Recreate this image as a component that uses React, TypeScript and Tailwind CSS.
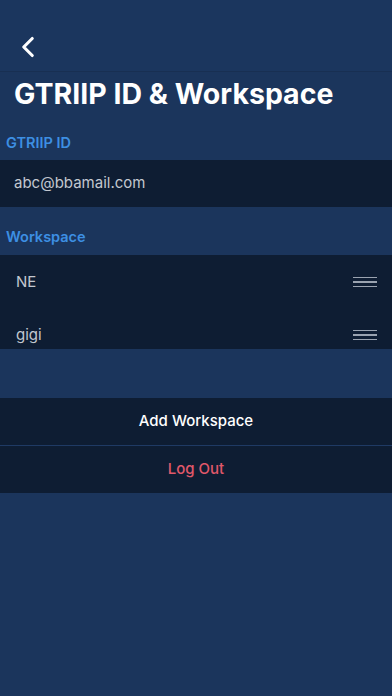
import { ChevronLeft } from 'lucide-react'

function Handle() {
  return (
    <div className="flex flex-col gap-[3px] w-6">
      <div className="h-[1.5px] bg-[#9aa3b0]" />
      <div className="h-[1.5px] bg-[#9aa3b0]" />
      <div className="h-[1.5px] bg-[#9aa3b0]" />
    </div>
  )
}

export default function App() {
  const workspaces = ['NE', 'gigi']

  return (
    <main
      className="w-[392px] h-[696px] bg-[#1b355c] text-white flex flex-col"
      style={{ fontFamily: 'Inter, "Noto Sans", sans-serif' }}
    >
      <div className="h-[72px] bg-[#1b365e] border-b border-[#182f52] flex items-end pb-[7px] pl-[11px]">
        <ChevronLeft className="w-[34px] h-[34px] text-white" strokeWidth={2.2} />
      </div>

      <h1 className="text-[28.5px] font-bold leading-[34px] pl-[14px] pt-[5px]">
        GTRIIP ID &amp; Workspace
      </h1>

      <div className="text-[#3d8fe3] text-[14.5px] font-semibold pl-[6px] mt-[22px] leading-[20px]">
        GTRIIP ID
      </div>
      <div className="mt-[7px] h-[47px] bg-[#0e1d33] flex items-center pl-[14px] text-[15px] text-[#c3c8d0]">
        abc@bbamail.com
      </div>

      <div className="text-[#3d8fe3] text-[14.5px] font-semibold pl-[6px] mt-[20px] leading-[20px]">
        Workspace
      </div>
      <div className="mt-[8px] bg-[#0e1d33]">
        {workspaces.map((w, i) => (
          <div
            key={w}
            className={`h-[47px] flex items-center justify-between pl-[16px] pr-[15px] text-[15px] text-[#c3c8d0] ${
              i === 1 ? 'pt-[19px]' : 'pt-[7px]'
            }`}
          >
            <span>{w}</span>
            <Handle />
          </div>
        ))}
      </div>

      <div className="mt-[49px] flex flex-col">
        <button className="h-[47px] bg-[#0e1d33] text-[15px] font-medium text-white">
          Add Workspace
        </button>
        <div className="h-px bg-[#1f3a64]" />
        <button className="h-[47px] bg-[#0e1d33] text-[15px] font-medium text-[#e0586a]">
          Log Out
        </button>
      </div>
    </main>
  )
}
